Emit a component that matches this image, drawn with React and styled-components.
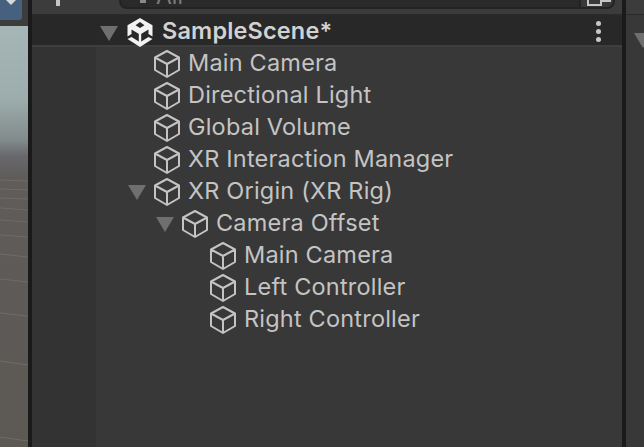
import React from "react";
import styled, { createGlobalStyle } from "styled-components";

const tree = [
  { name: "Main Camera", depth: 0 },
  { name: "Directional Light", depth: 0 },
  { name: "Global Volume", depth: 0 },
  { name: "XR Interaction Manager", depth: 0 },
  { name: "XR Origin (XR Rig)", depth: 0, open: true },
  { name: "Camera Offset", depth: 1, open: true },
  { name: "Main Camera", depth: 2 },
  { name: "Left Controller", depth: 2 },
  { name: "Right Controller", depth: 2 },
];

const gridLines = [
  [180, 181], [189, 190], [198, 199], [208, 210], [220, 222], [235, 237],
  [254, 257], [279, 282], [313, 316], [361, 365], [437, 441],
];

function CubeIcon() {
  return (
    <Cube viewBox="0 0 26 28">
      <path
        d="M13 1 L25 7.5 V20 L13 27 L1 20 V7.5 Z M1 7.5 L13 14 L25 7.5 M13 14 V27"
        fill="none"
        stroke="#c4c4c4"
        strokeWidth="2"
        strokeLinejoin="round"
      />
    </Cube>
  );
}

function UnityLogo() {
  return (
    <Logo viewBox="0 0 26 29">
      <path
        fill="#f2f2f2"
        fillRule="evenodd"
        d="M13 0 L25.5 7.3 V18.5 L21.5 16 V11.5 L14 16 H12 L4.5 11.5 V16 L0.5 18.5 V7.3 Z M13 4 L8.5 7.3 L13 10 L17.5 7.3 Z"
      />
      <path fill="#f2f2f2" d="M11.8 16 H14.2 V24 H11.8 Z" />
      <path fill="#f2f2f2" d="M0.5 21 L4.5 19 L11.8 23.5 H14.2 L21.5 19 L25.5 21 L13 29 Z" />
    </Logo>
  );
}

function SceneRow({ name, depth, open }) {
  return (
    <Row $depth={depth}>
      <ArrowCell>{open && <Arrow />}</ArrowCell>
      <CubeIcon />
      <RowLabel>{name}</RowLabel>
    </Row>
  );
}

export default function App() {
  return (
    <Page>
      <GlobalStyle />
      <ScenePane>
        <SceneBar>
          <SceneButton>
            <ButtonCaret />
          </SceneButton>
        </SceneBar>
        <Viewport>
          <GridDrawing viewBox="0 0 28 421" preserveAspectRatio="none">
            {gridLines.map(([a, b]) => (
              <line key={a} x1="0" y1={a - 26} x2="28" y2={b - 26} stroke="#6f6b67" strokeWidth="1" />
            ))}
          </GridDrawing>
        </Viewport>
      </ScenePane>
      <Hierarchy>
        <Toolbar>
          <PlusMark />
          <SearchField>
            <SearchGlyph />
            <SearchText>All</SearchText>
            <SearchMenu>
              <MenuGlyph />
            </SearchMenu>
          </SearchField>
        </Toolbar>
        <SceneHeader>
          <HeaderArrowCell>
            <HeaderArrow />
          </HeaderArrowCell>
          <UnityLogo />
          <HeaderLabel>SampleScene*</HeaderLabel>
          <Kebab>
            <Dot />
            <Dot />
            <Dot />
          </Kebab>
        </SceneHeader>
        <TreeBody>
          <Gutter />
          <RowList>
            {tree.map((item, i) => (
              <SceneRow key={i} {...item} />
            ))}
          </RowList>
        </TreeBody>
      </Hierarchy>
      <SidePane>
        <SideTop />
        <SideArrow />
      </SidePane>
    </Page>
  );
}

const GlobalStyle = createGlobalStyle`
  html, body {
    margin: 0;
    padding: 0;
    background: #383838;
    overflow: hidden;
  }
`;
const Page = styled.div`
  display: flex;
  width: 644px;
  height: 447px;
  overflow: hidden;
  font-family: Inter, "Liberation Sans", sans-serif;
`;
const ScenePane = styled.div`
  display: flex;
  flex-direction: column;
  flex: 0 0 28px;
`;
const SceneBar = styled.div`
  flex: 0 0 26px;
  background: #3c3c3c;
`;
const SceneButton = styled.div`
  display: flex;
  justify-content: center;
  width: 22px;
  height: 20px;
  background: #46607f;
  border-bottom-right-radius: 3px;
`;
const ButtonCaret = styled.div`
  width: 0;
  height: 0;
  border-left: 5px solid transparent;
  border-right: 5px solid transparent;
  border-top: 5px solid #d8d8d8;
`;
const Viewport = styled.div`
  flex: 1;
  background: linear-gradient(
    to bottom,
    #a6b6b6 0,
    #9dadad 72px,
    #828b8b 114px,
    #68686b 130px,
    #5f5c5a 152px,
    #5c5854 100%
  );
`;
const GridDrawing = styled.svg`
  display: block;
  width: 28px;
  height: 421px;
`;
const Hierarchy = styled.div`
  display: flex;
  flex-direction: column;
  flex: 0 0 590px;
  margin: 0 4px;
  box-shadow: -4px 0 0 #1a1a1a, 4px 0 0 #1a1a1a;
`;
const Toolbar = styled.div`
  display: flex;
  align-items: flex-start;
  flex: 0 0 15px;
  box-sizing: border-box;
  padding-right: 7px;
  background: #3c3c3c;
  border-bottom: 1px solid #2a2a2a;
  overflow: hidden;
`;
const PlusMark = styled.div`
  flex: 0 0 4px;
  height: 6px;
  margin: 0 59px 0 24px;
  background: #c4c4c4;
`;
const SearchField = styled.div`
  display: flex;
  align-items: flex-end;
  flex: 1;
  flex-shrink: 0;
  height: 34px;
  margin-top: -25px;
  background: #2a2a2a;
  border: 2px solid #232323;
  border-radius: 8px;
  overflow: hidden;
  box-sizing: border-box;
`;
const SearchGlyph = styled.div`
  flex: 0 0 6px;
  height: 3px;
  margin: 0 0 4px 19px;
  background: #8a8a8a;
`;
const SearchText = styled.div`
  flex: 1;
  margin: 0 0 -1px 10px;
  color: #7c7c7c;
  font-size: 23px;
  line-height: 23px;
`;
const SearchMenu = styled.div`
  position: relative;
  flex: 0 0 34px;
  height: 100%;
  box-sizing: border-box;
  background: #383838;
  border-left: 2px solid #232323;
`;
const MenuGlyph = styled.div`
  position: absolute;
  left: 6px;
  bottom: 1px;
  width: 11px;
  height: 10px;
  border: 2px solid #c4c4c4;
  box-shadow: 10px -3px 0 -1px #c4c4c4;
`;
const SceneHeader = styled.div`
  display: flex;
  align-items: center;
  flex: 0 0 32px;
  min-height: 0;
  box-sizing: border-box;
  background: #282828;
  border-bottom: 2px solid #3e3e3e;
`;
const HeaderArrowCell = styled.div`
  display: flex;
  justify-content: center;
  flex: 0 0 94px;
  margin-top: 6px;
  padding-left: 60px;
  box-sizing: border-box;
`;
const HeaderArrow = styled.div`
  width: 0;
  height: 0;
  border-left: 9px solid transparent;
  border-right: 9px solid transparent;
  border-top: 15px solid #6f6f6f;
`;
const Logo = styled.svg`
  flex: 0 0 26px;
  width: 26px;
  height: 29px;
  margin: 5px 0 0 1px;
`;
const HeaderLabel = styled.div`
  flex: 1;
  margin-left: 9px;
  color: #d2d2d2;
  font-size: 23.5px;
  font-weight: 600;
  letter-spacing: 0.15px;
  white-space: nowrap;
`;
const Kebab = styled.div`
  display: flex;
  flex-direction: column;
  gap: 3px;
  margin: 2px 21px 0 0;
`;
const Dot = styled.div`
  width: 5px;
  height: 5px;
  border-radius: 50%;
  background: #c8c8c8;
`;
const TreeBody = styled.div`
  display: flex;
  flex: 1;
`;
const Gutter = styled.div`
  flex: 0 0 64px;
  background: #333333;
`;
const RowList = styled.div`
  flex: 1;
  background: #383838;
`;
const Row = styled.div`
  display: flex;
  align-items: center;
  height: 32px;
  padding-left: ${(p) => 29 + p.$depth * 28}px;
`;
const ArrowCell = styled.div`
  display: flex;
  justify-content: center;
  flex: 0 0 28px;
`;
const Arrow = styled.div`
  width: 0;
  height: 0;
  margin: 3px 5px 0 0;
  border-left: 9px solid transparent;
  border-right: 9px solid transparent;
  border-top: 15px solid #6f6f6f;
`;
const Cube = styled.svg`
  flex: 0 0 26px;
  width: 26px;
  height: 28px;
  margin: 2px 0 0 1px;
`;
const RowLabel = styled.div`
  margin: -2px 0 0 8px;
  color: #c4c4c4;
  font-size: 23.5px;
  letter-spacing: 0.2px;
  white-space: nowrap;
`;
const SidePane = styled.div`
  position: relative;
  flex: 1;
  background: #383838;
`;
const SideTop = styled.div`
  height: 14px;
  background: #3c3c3c;
  border-bottom: 1px solid #2a2a2a;
`;
const SideArrow = styled.div`
  position: absolute;
  top: 33px;
  left: 8px;
  width: 0;
  height: 0;
  border-left: 9px solid transparent;
  border-right: 9px solid transparent;
  border-top: 15px solid #6f6f6f;
`;
